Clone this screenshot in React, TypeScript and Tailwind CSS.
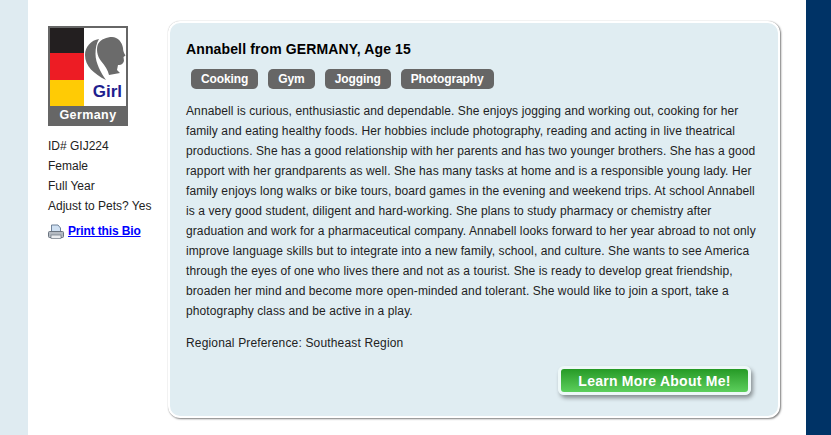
const bio = [
  "Annabell is curious, enthusiastic and dependable. She enjoys jogging and working out, cooking for her",
  "family and eating healthy foods. Her hobbies include photography, reading and acting in live theatrical",
  "productions. She has a good relationship with her parents and has two younger brothers. She has a good",
  "rapport with her grandparents as well. She has many tasks at home and is a responsible young lady. Her",
  "family enjoys long walks or bike tours, board games in the evening and weekend trips. At school Annabell",
  "is a very good student, diligent and hard-working. She plans to study pharmacy or chemistry after",
  "graduation and work for a pharmaceutical company. Annabell looks forward to her year abroad to not only",
  "improve language skills but to integrate into a new family, school, and culture. She wants to see America",
  "through the eyes of one who lives there and not as a tourist. She is ready to develop great friendship,",
  "broaden her mind and become more open-minded and tolerant. She would like to join a sport, take a",
  "photography class and be active in a play.",
]

const tags = ["Cooking", "Gym", "Jogging", "Photography"]

const Badge = () => (
  <div className="w-[80px] h-[100px] bg-[#666] p-[2px] flex flex-col">
    <div className="flex h-[78px] bg-white">
      <div className="w-[34px] flex flex-col">
        <div className="h-[25px] bg-[#231f20]" />
        <div className="h-[27px] bg-[#ed1c24]" />
        <div className="h-[26px] bg-[#ffcb05]" />
      </div>
      <div className="flex-1 flex flex-col items-end relative">
        <svg width="42" height="54" viewBox="0 0 42 54" className="absolute left-0 top-0">
          <path d="M15 11 C7 12 1 19 1 27 C1 38 10 46 22 52 C17 45 11.5 35 11.5 26 C11.5 20 12.5 15 15 11 Z" fill="#6b6b6b" />
          <path d="M14 16 C17 11 23 9 28 9 C34 9 38 14 39 20 C39 23 40 25 41.5 27.5 L39.5 29 L40 33 C39 36 37 37.5 34 37 L33 42 L36 45 L25 47 C24 42 21 38 17 33 C13 28 12 21 14 16 Z" fill="#6b6b6b" />
        </svg>
        <span className="absolute right-[4px] top-[54px] text-[#1f1f8f] text-[17px] leading-[19px] font-bold">Girl</span>
      </div>
    </div>
    <div className="flex-1 text-center text-white text-[12.5px] leading-[18px] font-bold tracking-[0.4px]">Germany</div>
  </div>
)

const PrinterIcon = () => (
  <svg width="16" height="15" viewBox="0 0 16 15">
    <path d="M3.5 1 H10 L12.5 4 V8 H3.5 Z" fill="#cfe0f2" stroke="#6f8199" strokeWidth="1" />
    <rect x="0.5" y="7.5" width="15" height="6" rx="1" fill="#b4bac2" stroke="#6a7480" />
    <rect x="3" y="11" width="10" height="3.5" fill="#e9ebee" stroke="#6a7480" strokeWidth="0.7" />
  </svg>
)

export default function App() {
  return (
    <div className="w-[831px] h-[435px] overflow-hidden flex bg-[#dfebf1] font-['Liberation_Sans',Arial,sans-serif] text-[12px] text-[#222]">
      <div className="ml-[28px] w-[778px] h-full bg-white flex pl-[20px] pt-[21px]">
        <aside className="w-[120px] pt-[5px]">
          <Badge />
          <div className="mt-[10px] leading-[20px]">
            <p>ID# GIJ224</p>
            <p>Female</p>
            <p>Full Year</p>
            <p>Adjust to Pets? Yes</p>
          </div>
          <a href="#" className="mt-[5px] flex items-center gap-[4px] leading-[20px] font-bold text-[#0000ff] underline tracking-[-0.15px]">
            <PrinterIcon />
            Print this Bio
          </a>
        </aside>
        <main className="w-[612px] h-[397px] rounded-[12px] border-[2px] border-white bg-[#e0edf2] shadow-[1px_1px_2px_rgba(0,0,0,0.5),0_0_1px_rgba(0,0,0,0.25)] pl-[16px] pt-[16px]">
          <h1 className="text-[14px] leading-[20px] font-bold text-black tracking-[0.13px]">Annabell from GERMANY, Age 15</h1>
          <div className="mt-[10px] ml-[5px] flex gap-[10px]">
            {tags.map((tag) => (
              <span key={tag} className="h-[20px] px-[10px] rounded-[5px] bg-[#666] text-white font-bold leading-[20px] tracking-[-0.1px]">
                {tag}
              </span>
            ))}
          </div>
          <div className="mt-[12px] leading-[20px] whitespace-nowrap tracking-[0.1px]">
            {bio.map((line) => (
              <p key={line}>{line}</p>
            ))}
          </div>
          <p className="mt-[12px] leading-[20px] tracking-[0.16px]">Regional Preference: Southeast Region</p>
          <div className="mt-[13px] mr-[27px] flex justify-end">
            <a href="#" className="w-[193px] h-[29px] rounded-[6px] border-[3px] border-[#eef8f8] bg-gradient-to-b from-[#259a25] to-[#5ccf5c] shadow-[2px_3px_4px_rgba(0,0,0,0.4)] text-center text-white text-[14px] font-bold leading-[24px] tracking-[0.25px]">
              Learn More About Me!
            </a>
          </div>
        </main>
      </div>
      <div className="flex-1 h-full bg-[#003366]" />
    </div>
  )
}
